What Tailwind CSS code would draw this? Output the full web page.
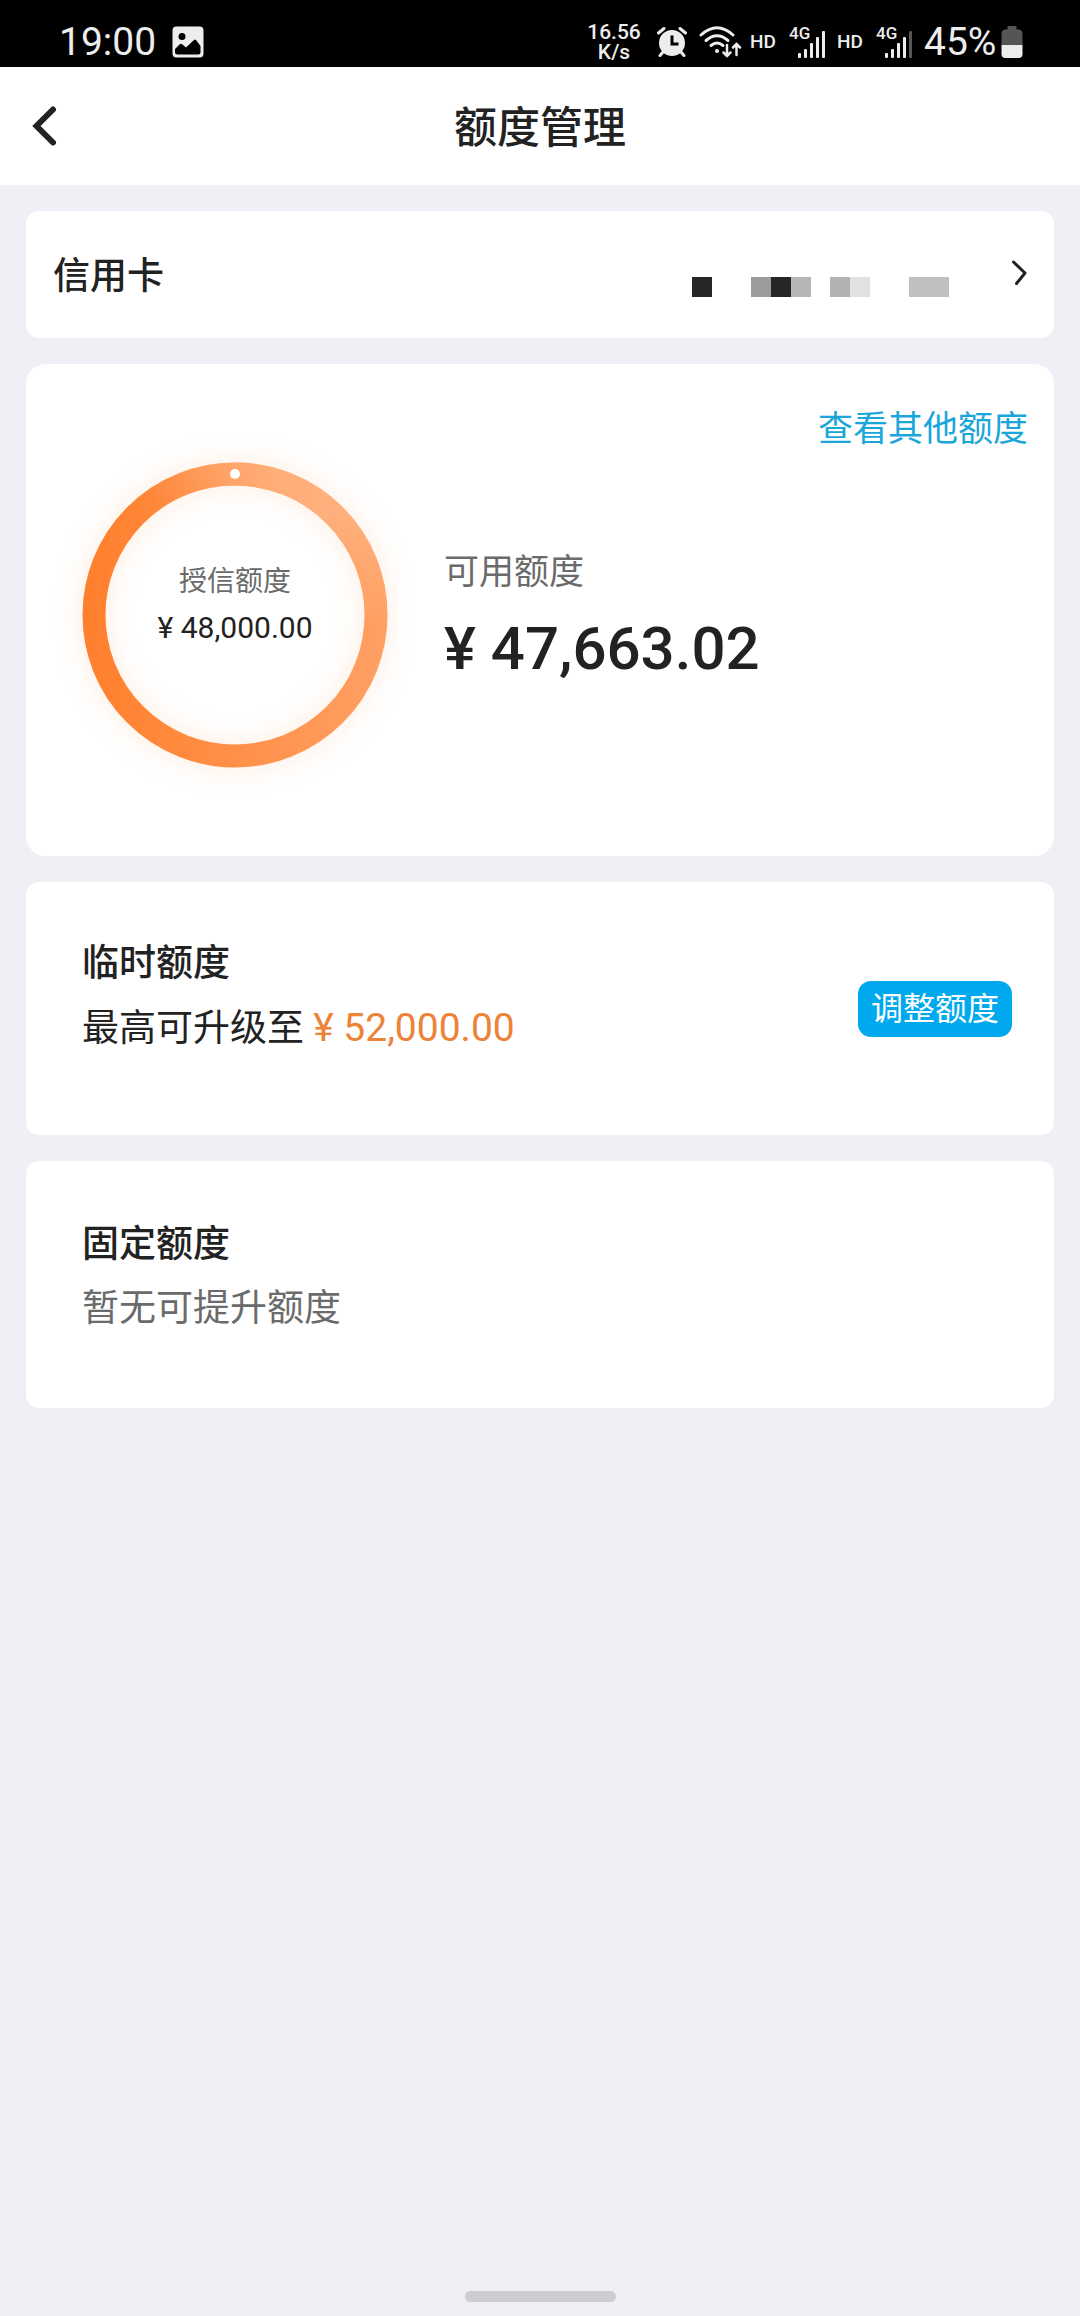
<!DOCTYPE html>
<html lang="zh-CN">
<head>
<meta charset="utf-8">
<meta name="viewport" content="width=device-width, initial-scale=1">
<title>额度管理</title>
<script src="https://cdn.jsdelivr.net/npm/@tailwindcss/browser@4"></script>
</head>
<body class="flex min-h-screen flex-col bg-[#efeff5] font-[Roboto,'Noto_Sans_CJK_SC',sans-serif] text-[#222222]">

  <!-- Status bar -->
  <div class="flex h-[67px] items-center justify-between bg-black pt-4 pr-[57px] pl-[59px] text-[#ededed]">
    <div class="flex items-center gap-4">
      <span class="text-[39px] leading-[50px]">19:00</span>
      <svg class="h-8 w-8" viewBox="0 0 32 32" aria-hidden="true">
        <rect x="0.5" y="0.5" width="31" height="31" rx="4" fill="#ededed"/>
        <circle cx="10" cy="10.500" r="3.500" fill="#000"/>
        <path d="M3 23 L7.500 18.500 Q9 17 10.500 18.500 L14 21.500 L22 14 Q23 13 24 14 L28.500 20 V26 Q28.500 28.500 26 28.500 H5.500 Q3 28.500 3 26 Z" fill="#000"/>
      </svg>
    </div>
    <div class="flex items-center">
      <div class="mr-4 flex w-[54px] flex-col items-center text-[21px] leading-5 font-medium">
        <span>16.56</span>
        <span>K/s</span>
      </div>
      <svg class="mr-3 h-8 w-[30px]" viewBox="0 0 30 32" fill="none" stroke="#ededed" aria-hidden="true">
        <circle cx="15" cy="17" r="13" fill="#ededed" stroke="none"/>
        <path d="M1.500 7 L7 2.500 M28.500 7 L23 2.500" stroke-width="3" stroke-linecap="round"/>
        <path d="M6 26 L3 29.500 M24 26 L27 29.500" stroke-width="3" stroke-linecap="round"/>
        <path d="M15 9.500 V18 H21.500" stroke="#000" stroke-width="3"/>
      </svg>
      <svg class="mr-2 h-8 w-[43px]" viewBox="0 0 43 32" fill="none" stroke="#ededed" stroke-width="3" stroke-linecap="round" aria-hidden="true">
        <path d="M2 9 Q18 -5.500 34 9"/>
        <path d="M7 14.500 Q18 5 29 14.500"/>
        <path d="M12 19.500 Q18 14.500 24 19.500"/>
        <circle cx="18" cy="25" r="2" fill="#ededed" stroke="none"/>
        <path d="M28 19 V30 M24.500 26.500 L28 30 L31.500 26.500 M37.500 29 V18 M34 21.500 L37.500 18 L41 21.500" stroke-width="2.500"/>
      </svg>
      <span class="w-[38px] text-[19px] leading-6 font-medium">HD</span>
      <svg class="mr-[11px] h-8 w-[38px] overflow-visible" viewBox="0 0 38 32" fill="#ededed" aria-hidden="true">
        <text x="1" y="13" font-size="17" font-weight="500">4G</text>
        <rect x="10" y="27" width="3" height="5" rx="1"/>
        <rect x="16" y="23" width="3" height="9" rx="1"/>
        <rect x="22" y="17" width="3" height="15" rx="1"/>
        <rect x="28" y="11" width="3" height="21" rx="1"/>
        <rect x="34" y="5" width="3" height="27" rx="1"/>
      </svg>
      <span class="w-[38px] text-[19px] leading-6 font-medium">HD</span>
      <svg class="mr-3 h-8 w-[37px] overflow-visible" viewBox="0 0 37 32" fill="#ededed" aria-hidden="true">
        <text x="1" y="13" font-size="17" font-weight="500">4G</text>
        <rect x="10" y="27" width="3" height="5" rx="1"/>
        <rect x="16" y="23" width="3" height="9" rx="1"/>
        <rect x="22" y="17" width="3" height="15" rx="1"/>
        <rect x="28" y="11" width="3" height="21" rx="1"/>
        <rect x="34" y="5" width="3" height="27" rx="1" fill="#555"/>
      </svg>
      <span class="mr-1 w-[73px] text-[39px] leading-[50px]">45%</span>
      <svg class="h-8 w-[22px]" viewBox="0 0 22 32" aria-hidden="true">
        <path d="M6.500 0 H15.500 V3.500 H18 Q21.500 4 21.500 8 V19 H0.500 V8 Q0.500 4 4 3.500 H6.500 Z" fill="#555"/>
        <path d="M0.500 19 H21.500 V28 Q21.500 32 17.500 32 H4.500 Q0.500 32 0.500 28 Z" fill="#ededed"/>
      </svg>
    </div>
  </div>

  <!-- Title bar -->
  <header class="grid h-[118px] grid-cols-[1fr_auto_1fr] items-center bg-white px-7">
    <button type="button" aria-label="返回" class="w-8">
      <svg class="h-12 w-8" viewBox="0 0 32 48" fill="none" stroke="#222" stroke-width="6" stroke-linecap="round" aria-hidden="true">
        <path d="M25 7.500 L8.500 24 L25 40.500"/>
      </svg>
    </button>
    <h1 class="pt-1 text-[43px] leading-[60px] font-medium">额度管理</h1>
  </header>

  <main class="flex flex-col gap-[26px] p-[26px]">
    <!-- Card selector -->
    <button type="button" class="flex h-[127px] items-center rounded-[13px] bg-white pr-6 pl-[27px] text-left">
      <span class="grow pt-1 text-[37px] leading-[52px] font-medium">信用卡</span>
      <svg class="mt-6 mr-[61px] h-5 w-[257px]" viewBox="0 0 13 1" preserveAspectRatio="none" shape-rendering="crispEdges" aria-hidden="true">
        <rect x="0" width="1" height="1" fill="#262626"/>
        <rect x="3" width="1" height="1" fill="#9b9d9b"/>
        <rect x="4" width="1" height="1" fill="#262626"/>
        <rect x="5" width="1" height="1" fill="#b6b6b6"/>
        <rect x="7" width="1" height="1" fill="#b2b2b2"/>
        <rect x="8" width="1" height="1" fill="#dfe2e1"/>
        <rect x="11" width="2" height="1" fill="#bfbfbf"/>
      </svg>
      <svg class="h-8 w-5" viewBox="0 0 20 32" fill="none" stroke="#222" stroke-width="3" stroke-linecap="round" stroke-linejoin="round" aria-hidden="true">
        <path d="M3.500 3 L15 14 L6.500 24.500"/>
      </svg>
    </button>

    <!-- Credit overview -->
    <section class="flex h-[492px] flex-col rounded-[20px] bg-white">
      <a href="#" class="mt-10 mr-[26px] self-end text-[35px] leading-[52px] text-[#1ba6da]">查看其他额度</a>
      <div class="-mt-6 flex items-center pl-[26px]">
        <div class="grid h-[366px] w-[366px] shrink-0 place-items-center">
          <svg class="col-start-1 row-start-1 h-[366px] w-[366px]" viewBox="0 0 366 366" fill="none" aria-hidden="true">
            <defs>
              <linearGradient id="fade" gradientUnits="userSpaceOnUse" x1="30" y1="183" x2="336" y2="183">
                <stop offset="0" stop-color="#ff7f2c"/>
                <stop offset="0.500" stop-color="#ff9048"/>
                <stop offset="1" stop-color="#ffa065"/>
              </linearGradient>
              <linearGradient id="veil" gradientUnits="userSpaceOnUse" x1="130" y1="120" x2="235" y2="60">
                <stop offset="0" stop-color="#ffb584" stop-opacity="0"/>
                <stop offset="1" stop-color="#ffb584" stop-opacity="0.800"/>
              </linearGradient>
              <linearGradient id="veilDown" gradientUnits="userSpaceOnUse" x1="0" y1="80" x2="0" y2="200">
                <stop offset="0" stop-color="#fff"/>
                <stop offset="1" stop-color="#000"/>
              </linearGradient>
              <mask id="upper" maskUnits="userSpaceOnUse" x="0" y="0" width="366" height="366">
                <rect width="366" height="366" fill="url(#veilDown)"/>
              </mask>
              <filter id="glow" x="-20%" y="-20%" width="140%" height="140%">
                <feGaussianBlur stdDeviation="12"/>
              </filter>
            </defs>
            <circle cx="183" cy="183" r="141" stroke="#ffc9a0" stroke-opacity="0.300" stroke-width="28" filter="url(#glow)"/>
            <circle cx="183" cy="183" r="141" stroke="url(#fade)" stroke-width="23"/>
            <circle cx="183" cy="183" r="141" stroke="url(#veil)" stroke-width="23" mask="url(#upper)"/>
            <circle cx="183" cy="42" r="5" fill="#fff"/>
          </svg>
          <div class="col-start-1 row-start-1 mb-5 flex flex-col items-center">
            <span class="text-[28px] leading-[46px] text-[#6b6b6b]">授信额度</span>
            <span class="text-[30px] leading-[46px]">¥ 48,000.00</span>
          </div>
        </div>
        <div class="flex flex-col pt-1 pl-[26px]">
          <span class="text-[35px] leading-[52px] text-[#6b6b6b]">可用额度</span>
          <span class="mt-3 text-[60px] leading-[76px] font-medium">¥ 47,663.02</span>
        </div>
      </div>
    </section>

    <!-- Temporary limit -->
    <section class="flex h-[253px] items-center justify-between rounded-[13px] bg-white pr-[42px] pl-14">
      <div class="mb-6 flex flex-col gap-3">
        <h2 class="text-[37px] leading-[52px] font-medium">临时额度</h2>
        <p class="text-[37px] leading-[52px]">最高可升级至 <span class="text-[39px] text-[#ec8338]">¥ 52,000.00</span></p>
      </div>
      <button type="button" class="h-14 w-[154px] rounded-[13px] bg-[#00a9ee] text-[32px] leading-[56px] text-white">调整额度</button>
    </section>

    <!-- Fixed limit -->
    <section class="flex h-[247px] items-center rounded-[13px] bg-white px-14">
      <div class="mb-4 flex flex-col gap-3">
        <h2 class="text-[37px] leading-[52px] font-medium">固定额度</h2>
        <p class="text-[37px] leading-[52px] text-[#6b6b6b]">暂无可提升额度</p>
      </div>
    </section>
  </main>

  <!-- Home indicator -->
  <div class="mt-auto mb-[14px] h-[11px] w-[151px] self-center rounded-full bg-[#cdccd1]"></div>
</body>
</html>
